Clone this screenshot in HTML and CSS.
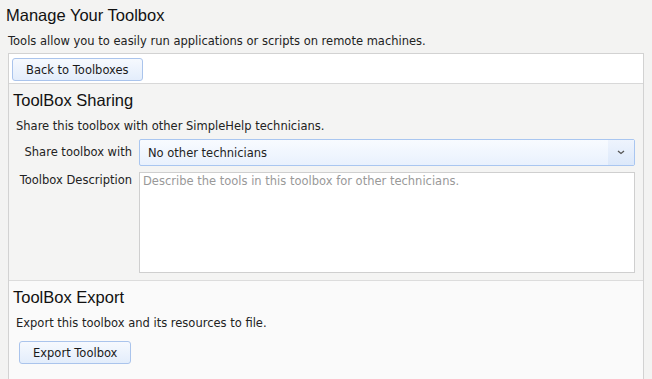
FILE: index.html
```html
<!DOCTYPE html>
<html>
<head>
<meta charset="utf-8">
<link rel="stylesheet" href="styles.css">
</head>
<body>
<h1 class="title">Manage Your Toolbox</h1>
<p class="intro">Tools allow you to easily run applications or scripts on remote machines.</p>
<div class="panel">
  <div class="toolbar">
    <button class="btn">Back to Toolboxes</button>
  </div>
  <div class="section sharing">
    <h2 class="heading">ToolBox Sharing</h2>
    <p class="desc">Share this toolbox with other SimpleHelp technicians.</p>
    <div class="form">
      <label class="label label-mid">Share toolbox with</label>
      <div class="select">
        <span class="select-text">No other technicians</span>
        <span class="select-arrow"><svg width="8" height="5" viewBox="0 0 8 5"><path d="M1 1 L4 3.5 L7 1" fill="none" stroke="#555" stroke-width="1.3"/></svg></span>
      </div>
      <label class="label label-top">Toolbox Description</label>
      <div class="textarea"><span class="placeholder">Describe the tools in this toolbox for other technicians.</span></div>
    </div>
  </div>
  <div class="section export">
    <h2 class="heading">ToolBox Export</h2>
    <p class="desc">Export this toolbox and its resources to file.</p>
    <button class="btn btn-export">Export Toolbox</button>
  </div>
</div>
</body>
</html>
```
FILE: styles.css
```css
html, body {
  margin: 0;
  padding: 0;
  background: #f3f3f2;
}
body {
  font-family: "DejaVu Sans", sans-serif;
  font-size: 11.5px;
  color: #222;
  height: 100vh;
  display: flex;
  flex-direction: column;
  overflow: hidden;
}
.title {
  margin: 0;
  padding: 5px 0 0 6px;
  font-family: "Liberation Sans", Arial, sans-serif;
  font-weight: normal;
  font-size: 16.5px;
  line-height: 20px;
  color: #111;
}
.intro {
  margin: 0;
  padding: 9px 0 0 8px;
  line-height: 15px;
  height: 19px;
}
.panel {
  margin: 0 8px;
  border: 1px solid #d2d2d2;
  border-bottom: none;
  flex: 1;
  min-height: 0;
  display: flex;
  flex-direction: column;
}
.toolbar {
  background: #fff;
  padding: 4px 3px 2px;
  border-bottom: 1px solid #d8d8d8;
  height: 23px;
}
.btn {
  font-family: "DejaVu Sans", sans-serif;
  font-size: 11.5px;
  color: #1a1a1a;
  height: 23px;
  padding: 0 13px;
  border: 1px solid #aac4ec;
  border-radius: 3px;
  background: linear-gradient(#f6f9fe, #e3edfb);
  margin: 0;
}
.section {
  padding: 0 8px 7px 4px;
}
.sharing {
  background: #f4f4f3;
  border-bottom: 1px solid #dcdcdc;
}
.export {
  background: #fafafa;
  flex: 1;
}
.heading {
  margin: 0;
  padding-top: 6px;
  font-family: "Liberation Sans", Arial, sans-serif;
  font-weight: normal;
  font-size: 16.5px;
  line-height: 20px;
  color: #111;
}
.desc {
  margin: 0;
  padding: 9px 0 0 3px;
  line-height: 15px;
}
.form {
  display: grid;
  grid-template-columns: 119px 1fr;
  column-gap: 7px;
  row-gap: 6px;
  margin-top: 5px;
}
.label {
  text-align: right;
  line-height: 15px;
}
.label-mid {
  align-self: center;
}
.label-top {
  padding-top: 1px;
}
.select {
  height: 25px;
  border: 1px solid #a9c6f0;
  border-radius: 2px;
  background: linear-gradient(#f8fbff, #e9f1fd);
  display: flex;
  align-items: center;
}
.select-text {
  flex: 1;
  padding-left: 8px;
}
.select-arrow {
  width: 26px;
  height: 100%;
  display: flex;
  align-items: center;
  justify-content: center;
  background: linear-gradient(#eef4fd, #dce8fa);
}
.textarea {
  height: 97px;
  border: 1px solid #cfcfcf;
  background: #fff;
  padding: 1px 3px;
  line-height: 15px;
}
.placeholder {
  color: #999;
}
.btn-export {
  margin: 10px 0 0 6px;
}
```
